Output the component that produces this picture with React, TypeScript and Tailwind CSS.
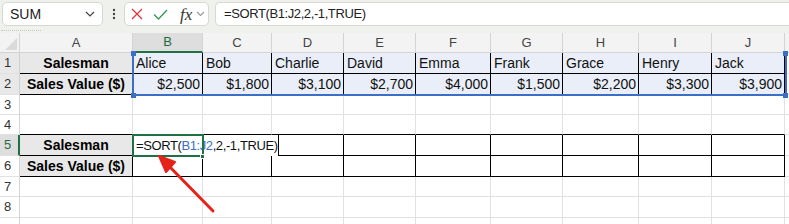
import React from "react";

const colW = [20, 113, 70, 69, 72, 72, 75, 72, 76, 73, 73];
const letters = ["A", "B", "C", "D", "E", "F", "G", "H", "I", "J"];
const rowH = [21, 21, 20, 20, 21, 21, 20, 21, 12];

type Row = { n: number; a?: string; vals?: string[]; right?: boolean };

const rows: Row[] = [
  { n: 1, a: "Salesman", vals: ["Alice", "Bob", "Charlie", "David", "Emma", "Frank", "Grace", "Henry", "Jack"] },
  {
    n: 2,
    a: "Sales Value ($)",
    vals: ["$2,500", "$1,800", "$3,100", "$2,700", "$4,000", "$1,500", "$2,200", "$3,300", "$3,900"],
    right: true,
  },
  { n: 3 },
  { n: 4 },
  { n: 5, a: "Salesman" },
  { n: 6, a: "Sales Value ($)" },
  { n: 7 },
  { n: 8 },
  { n: 9 },
];

const font = { fontFamily: '"Liberation Sans", Arial, sans-serif' };

function Toolbar() {
  return (
    <div className="h-[33px] bg-[#eff2ec] flex flex-col">
      <div className="flex items-center h-[24px] mt-[2px] pl-[2px]">
        <div className="w-[101px] h-[24px] bg-white border border-[#d6d9d3] rounded-[5px] flex items-center justify-between pl-[7px] pr-[5px]">
          <span className="text-[14px] text-[#222]">SUM</span>
          <svg width="10" height="6" viewBox="0 0 10 6" className="mr-[2px]">
            <path d="M1 1 L5 5 L9 1" fill="none" stroke="#444" strokeWidth="1.2" />
          </svg>
        </div>
        <div className="w-[21px] flex justify-center">
          <svg width="4" height="12" viewBox="0 0 4 12">
            <circle cx="2" cy="2" r="1.2" fill="#444" />
            <circle cx="2" cy="6" r="1.2" fill="#444" />
            <circle cx="2" cy="10" r="1.2" fill="#444" />
          </svg>
        </div>
        <div className="w-[85px] h-[24px] bg-white border border-[#d6d9d3] rounded-[5px] flex items-center pl-[6px]">
          <svg width="12" height="12" viewBox="0 0 12 12">
            <path d="M1 1 L11 11 M11 1 L1 11" stroke="#d9363e" strokeWidth="1.3" fill="none" />
          </svg>
          <svg width="15" height="11" viewBox="0 0 15 11" className="ml-[10px]">
            <path d="M1 5.5 L5.5 10 L14 1" stroke="#2f9a52" strokeWidth="1.3" fill="none" />
          </svg>
          <span
            className="ml-[12px] text-[17px] italic text-[#333] leading-none"
            style={{ fontFamily: '"Liberation Serif", "Times New Roman", serif' }}
          >
            fx
          </span>
          <svg width="9" height="6" viewBox="0 0 9 6" className="ml-[4px]">
            <path d="M1 1 L4.5 4.5 L8 1" fill="none" stroke="#9a9a9a" strokeWidth="1.1" />
          </svg>
        </div>
        <div className="ml-[6px] flex-1 h-[24px] bg-white border border-r-0 border-[#d6d9d3] rounded-l-[5px] flex items-center pl-[8px]">
          <span className="text-[13px] tracking-[-0.4px] text-[#222]">=SORT(B1:J2,2,-1,TRUE)</span>
        </div>
      </div>
      <div className="mt-[4px] ml-[1px] w-[40px] border-t border-dotted border-[#c4cbc0]" />
    </div>
  );
}

function Sheet() {
  const template = colW.map((w) => `${w}px`).join(" ") + " 1fr";
  const cells: React.ReactNode[] = [];

  cells.push(
    <div key="corner" className="relative bg-[#f3f3f3] border-r border-b border-[#d4d4d4] h-[20px]">
      <svg width="12" height="12" viewBox="0 0 12 12" className="absolute right-[2px] bottom-[2px]">
        <path d="M12 0 L12 12 L0 12 Z" fill="#dadada" />
      </svg>
    </div>
  );
  letters.forEach((l) => {
    const active = l === "B";
    cells.push(
      <div
        key={"h" + l}
        className={
          active
            ? "bg-[#dedede] border-r border-[#d4d4d4] border-b-2 border-b-[#1e7145] h-[20px] flex items-center justify-center text-[13px] text-[#1e6b3f]"
            : "bg-[#f3f3f3] border-r border-b border-[#d4d4d4] h-[20px] flex items-center justify-center text-[13px] text-[#444]"
        }
      >
        {l}
      </div>
    );
  });
  cells.push(<div key="hfill" className="bg-[#f3f3f3] border-b border-[#d4d4d4] h-[20px]" />);

  rows.forEach((r, ri) => {
    const h = rowH[ri];
    const boxed = [1, 2, 5, 6].includes(r.n);
    const blackBottom = [1, 2, 4, 5, 6].includes(r.n);
    const hdrCls =
      r.n === 5
        ? "bg-[#dedede] text-[#1e6b3f] border-r-2 border-r-[#1e7145] border-b border-b-[#e1e1e1]"
        : r.n === 1 || r.n === 2
        ? "bg-[#e8e8e8] text-[#333] border-r border-r-[#cfcfcf] border-b border-b-[#e1e1e1]"
        : "bg-white text-[#333] border-r border-r-[#d4d4d4] border-b border-b-[#e1e1e1]";
    cells.push(
      <div key={"r" + r.n} className={`${hdrCls} flex items-center pl-[4px] text-[13px]`} style={{ height: h }}>
        {r.n < 9 ? r.n : null}
      </div>
    );
    for (let c = 0; c < 10; c++) {
      const rc = boxed ? "border-r-black" : "border-r-[#e1e1e1]";
      const bc = blackBottom ? "border-b-black" : "border-b-[#e1e1e1]";
      let bg = "bg-white";
      let content: React.ReactNode = null;
      let align = "justify-start pl-[3px]";
      if (c === 0 && r.a) {
        bg = "bg-[#e8e8e8]";
        content = <span className="font-bold text-[14px] text-black">{r.a}</span>;
        align = "justify-center";
      } else if (c > 0 && r.vals) {
        bg = "bg-[#e9eef8]";
        content = <span className="text-[14px] text-[#111]">{r.vals[c - 1]}</span>;
        align = r.right ? "justify-end pr-[2px]" : "justify-start pl-[3px]";
      }
      cells.push(
        <div
          key={`c${r.n}-${c}`}
          className={`${bg} border-r border-b ${rc} ${bc} flex items-center pt-[1px] ${align} overflow-hidden whitespace-nowrap`}
          style={{ height: h }}
        >
          {content}
        </div>
      );
    }
    cells.push(<div key={"f" + r.n} className="border-b border-b-[#e1e1e1] bg-white" style={{ height: h }} />);
  });

  return (
    <div className="relative">
      <div className="grid" style={{ gridTemplateColumns: template }}>
        {cells}
      </div>

      {/* formula range highlight B1:J2 */}
      <div className="absolute left-[132px] top-[20px] w-[655px] h-[43px] border-2 border-t-0 border-[#3b6fc4] pointer-events-none" />
      <div className="absolute left-[131px] top-[18px] w-[5px] h-[5px] bg-[#3b6fc4]" />
      <div className="absolute left-[783px] top-[18px] w-[5px] h-[5px] bg-[#3b6fc4]" />
      <div className="absolute left-[131px] top-[60px] w-[5px] h-[5px] bg-[#3b6fc4]" />
      <div className="absolute left-[783px] top-[60px] w-[5px] h-[5px] bg-[#3b6fc4]" />

      {/* in-cell editor B5 */}
      <div className="absolute left-[133px] top-[102px] w-[146px] h-[21px] bg-white flex items-center pl-[3px] pt-[1px] border-r border-black">
        <span className="text-[13px] tracking-[-0.4px] text-[#111] whitespace-nowrap">
          =SORT(<span className="text-[#3a6fc4]">B1:J2</span>,2,-1,TRUE)
        </span>
      </div>
      {/* active cell */}
      <div className="absolute left-[132px] top-[101px] w-[72px] h-[23px] border-2 border-[#1e7145] pointer-events-none" />
      <div className="absolute left-[200px] top-[121px] w-[5px] h-[5px] bg-[#1e7145] border border-white" />

      {/* red arrow */}
      <svg className="absolute left-0 top-0 pointer-events-none" width="789" height="191" viewBox="0 33 789 191">
        <line x1="213" y1="211" x2="168" y2="165" stroke="#e5231b" strokeWidth="3" strokeLinecap="round" />
        <path d="M159 156 L175 162 L166 172 Z" fill="#e5231b" stroke="#e5231b" strokeWidth="2" strokeLinejoin="round" />
      </svg>
    </div>
  );
}

export default function App() {
  return (
    <div className="w-[789px] h-[224px] overflow-hidden bg-white" style={font}>
      <Toolbar />
      <Sheet />
    </div>
  );
}
